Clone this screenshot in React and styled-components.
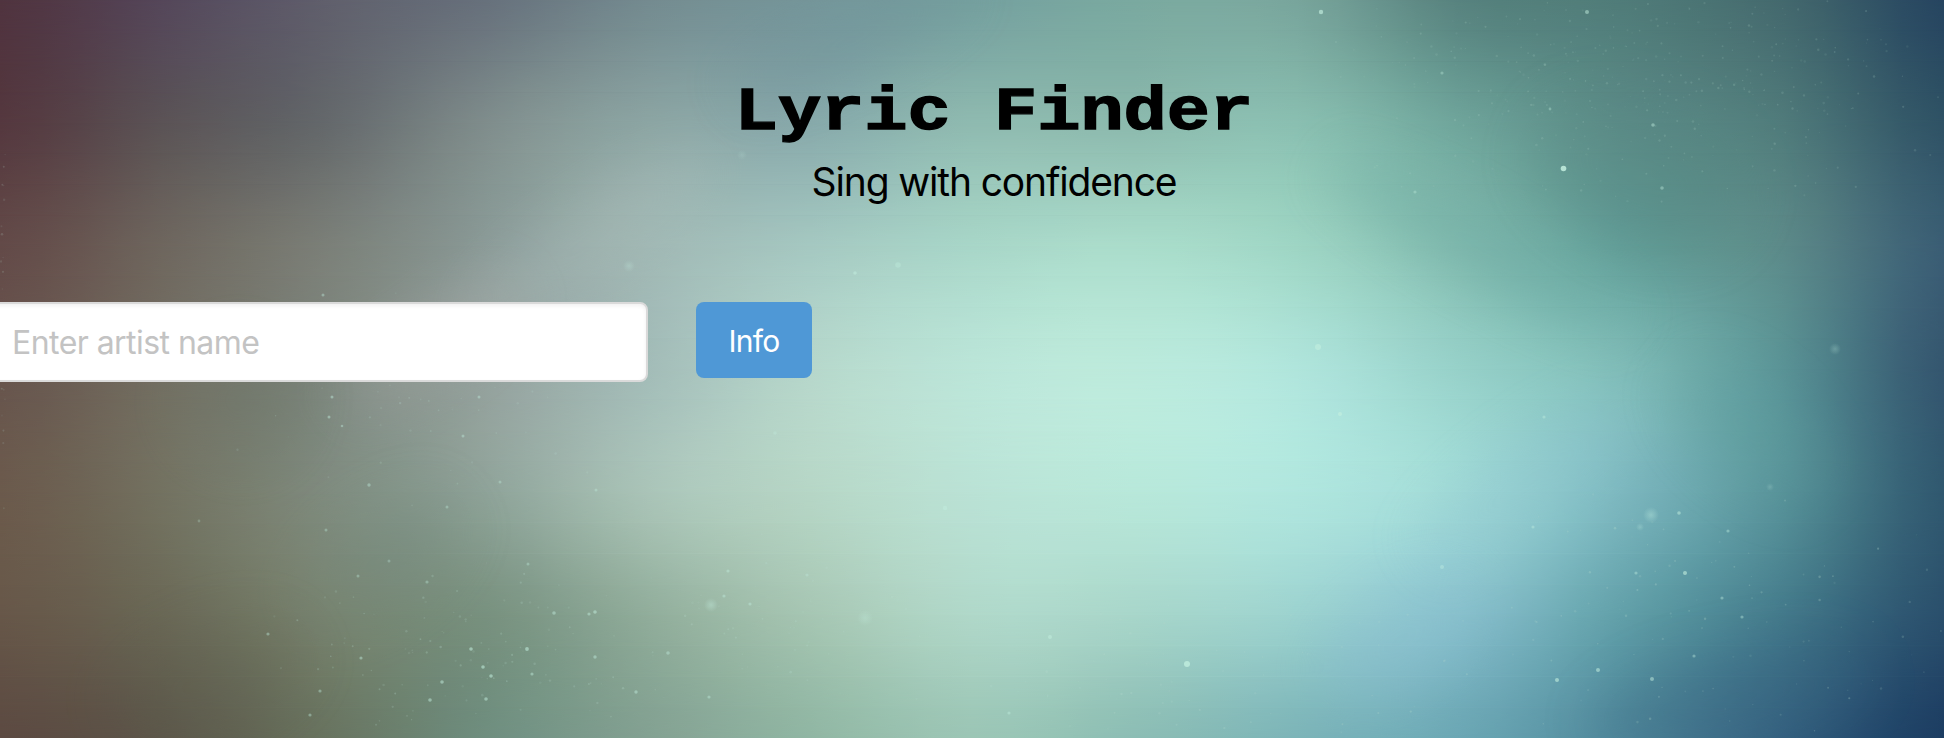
import React from 'react';
import styled, { createGlobalStyle } from 'styled-components';

const GlobalStyle = createGlobalStyle`
  body { margin: 0; font-family: Inter, "Liberation Sans", sans-serif; }
`;

const WIDTH = 1944;
const HEIGHT = 738;

/* Sky colours on an even grid, top to bottom, left to right. */
const SKY = [
  '50343f 55475a 605f6c 67717c 748b90 75969a 75a09f 7aa9a0 78a59c 58837f 507c79 44696e 264560',
  '55383f 5b5356 64686b 7f8d8c 8ca5a3 88aaab 8fbab0 8cbaae 8abfb1 6fa59b 5c8c88 507b7b 2f5265',
  '634a48 6e665e 7b7f78 8a9a97 9fb7b3 a5c8c1 a8d6c8 aadccb 9ed5c4 84bcb0 64a09a 5c8a89 3a5d74',
  '67544d 726e62 7b857c 94a19d a3bcb8 b6d7cb bbe5d8 bceadc b0e5dc 97d1c9 80bcb8 5a9396 34566f',
  '6b5a4c 737261 7f8b7e 8fa399 aac4b8 b6d6c6 bae2d5 b8e8da b0e6de a0d9d6 7db8bf 589299 30586f',
  '675749 6a6856 78836f 78917f 91ad9b a6c6b3 b0d8c9 a8d6ca 9cd2cf 88c0cb 62a0a9 447a8b 2a4f6c',
  '5c4a42 5d574a 68735f 6f8e7f 83a192 90b6a3 9bc5b5 8cbdb4 7cb4b8 6ba7b4 50889b 34607f 1c3d62',
].map((row) =>
  row.split(' ').map((hex) => [0, 2, 4].map((i) => parseInt(hex.slice(i, i + 2), 16)))
);

const spline = (a, b, c, d, t) =>
  0.5 * (2 * b + (c - a) * t + (2 * a - 5 * b + 4 * c - d) * t * t + (3 * b - a - 3 * c + d) * t * t * t);

const at = (list, i) => list[Math.max(0, Math.min(list.length - 1, i))];

function subdivide(points, steps) {
  const out = [];
  for (let i = 0; i < points.length - 1; i += 1) {
    for (let s = 0; s < steps; s += 1) {
      out.push(
        points[i].map((_, ch) =>
          spline(at(points, i - 1)[ch], points[i][ch], points[i + 1][ch], at(points, i + 2)[ch], s / steps)
        )
      );
    }
  }
  out.push(points[points.length - 1]);
  return out;
}

const fineRows = SKY.map((row) => subdivide(row, 4));
const fineColumns = fineRows[0].map((_, x) => subdivide(fineRows.map((row) => row[x]), 4));
const BANDS = fineColumns[0].map((_, y) => fineColumns.map((column) => column[y]));
const STEP = HEIGHT / (BANDS.length - 1);

/* Soft beams of light: x, y, rx, ry, rotation, colour, opacity. */
const GLOWS = [
  [590, 240, 150, 34, -35, '#b4c2c0', 0.25],
  [430, 345, 110, 28, -35, '#a9aba8', 0.4],
  [240, 400, 60, 60, 20, '#6c7467', 0.25],
  [210, 680, 100, 50, -20, '#5b5e4f', 0.2],
  [380, 560, 90, 45, -35, '#6e867c', 0.25],
  [1640, 175, 110, 70, 20, '#54847f', 0.25],
  [1480, 245, 170, 28, 28, '#6aa9a2', 0.4],
  [1530, 480, 130, 34, -35, '#8cc4d0', 0.25],
  [1400, 640, 90, 45, -35, '#89bfd2', 0.3],
  [1750, 430, 90, 45, 40, '#5b9c9c', 0.25],
  [1730, 700, 140, 45, -12, '#386580', 0.25],
  [850, 40, 130, 26, -25, '#6e9197', 0.3],
];

/* Bright stars: x, y, radius, opacity. */
const STARS = [
  [1321, 12, 2.2, 0.65], [1587, 12, 2, 0.5], [1563.5, 168.5, 2.8, 0.85], [1653, 125, 1.8, 0.45],
  [1662, 188, 1.8, 0.4], [1442, 73, 1.6, 0.35], [1415, 192, 1.6, 0.35], [1318, 347, 3, 0.55],
  [1340, 414, 2, 0.6], [1187, 664, 3, 0.75], [898, 265, 2.8, 0.35], [855, 273, 1.8, 0.5],
  [945, 508, 2.2, 0.4], [775, 433, 1.8, 0.3], [1679, 513, 1.8, 0.5], [1685, 573, 2, 0.6],
  [1442, 567, 2, 0.4], [1598, 670, 2, 0.55], [1557, 680, 2, 0.6], [1652, 679, 2, 0.5],
  [1636, 573, 1.6, 0.4], [1722, 598, 1.6, 0.4], [1742, 617, 1.6, 0.4], [1550, 109, 1.4, 0.35],
  [1533, 527, 1.6, 0.4], [1728, 531, 1.6, 0.4], [1544, 417, 1.6, 0.4], [1694, 656, 1.6, 0.4],
  [1050, 637, 2, 0.5], [668, 653, 1.8, 0.4], [709, 697, 1.6, 0.4], [1009, 713, 1.6, 0.4],
  [750, 604, 1.6, 0.4], [728, 571, 1.6, 0.4], [807, 575, 1.6, 0.3], [724, 596, 1.6, 0.4],
  [332, 397, 1.5, 0.45], [329, 417, 1.5, 0.45], [342, 426, 1.3, 0.4], [463, 436, 1.5, 0.4],
  [369, 485, 1.7, 0.4], [479, 397, 1.5, 0.4], [323, 295, 1.5, 0.4], [268, 634, 1.6, 0.4],
  [320, 691, 1.6, 0.4], [310, 715, 1.6, 0.4], [361, 658, 1.6, 0.45], [471, 649, 1.8, 0.55],
  [483, 667, 1.8, 0.55], [527, 649, 1.9, 0.55], [442, 682, 1.8, 0.5], [491, 676, 1.8, 0.55],
  [486, 699, 1.8, 0.5], [430, 700, 1.8, 0.5], [554, 613, 1.8, 0.45], [595, 612, 1.8, 0.5],
  [589, 614, 1.6, 0.45], [595, 657, 1.7, 0.45], [636, 692, 1.7, 0.45], [532, 674, 1.6, 0.45],
  [427, 582, 1.6, 0.35], [389, 561, 1.5, 0.3], [358, 576, 1.5, 0.35], [528, 564, 1.5, 0.35],
  [500, 482, 1.5, 0.35], [596, 490, 1.5, 0.35], [447, 507, 1.5, 0.35], [326, 530, 1.5, 0.35],
  [199, 521, 1.4, 0.25],
];

/* Large faint stars: x, y, radius, opacity. */
const HALOS = [
  [711, 605, 7, 0.35], [865, 618, 8, 0.25], [1651, 515, 8, 0.35], [1835, 349, 6, 0.25],
  [629, 266, 6, 0.25], [1770, 487, 4, 0.2], [1640, 527, 4, 0.25], [742, 155, 5, 0.15],
];

/* Dust clouds: centre x, y, spread x, y, count, opacity. */
const DUST = [
  [470, 650, 230, 90, 110, 0.22],
  [420, 400, 190, 120, 50, 0.2],
  [1640, 80, 340, 130, 420, 0.15],
  [1700, 620, 300, 130, 110, 0.22],
  [1180, 660, 280, 100, 80, 0.18],
  [800, 620, 200, 110, 60, 0.2],
  [2, 300, 4, 280, 24, 0.15],
];

function makeDust() {
  let seed = 71;
  const random = () => {
    seed = (seed * 16807) % 2147483647;
    return seed / 2147483647;
  };
  const spread = () => random() + random() - 1;
  return DUST.flatMap(([x, y, sx, sy, count, opacity]) =>
    Array.from({ length: count }, () => [
      x + spread() * sx,
      y + spread() * sy,
      0.6 + random() * 0.7,
      opacity * (0.4 + random() * 0.9),
    ])
  );
}

const DUST_STARS = makeDust();

const Page = styled.div`
  position: relative;
  width: 1944px;
  height: 738px;
  overflow: hidden;
`;

const Sky = styled.svg`
  position: absolute;
  inset: 0;
  width: 100%;
  height: 100%;
`;

const Content = styled.main`
  position: relative;
  display: flex;
  flex-direction: column;
`;

const Header = styled.header`
  display: flex;
  flex-direction: column;
  align-items: center;
  padding: 73px 0 0 44px;
  color: #000;
`;

const Title = styled.h1`
  margin: 0;
  font: 700 72px/80px "Liberation Mono", "Courier New", monospace;
  -webkit-text-stroke: 1.6px #000;
  stroke-linejoin: round;
  transform: scaleY(0.85);
`;

const Subtitle = styled.p`
  margin: 5px 0 0;
  font-size: 39px;
  line-height: 48px;
  letter-spacing: -1.15px;
`;

const SearchForm = styled.form`
  display: flex;
  align-items: flex-start;
  gap: 48px;
  margin: 96px 0 0 -12px;
`;

const ArtistInput = styled.input`
  box-sizing: border-box;
  width: 660px;
  height: 80px;
  padding: 0 22px;
  border: 2px solid #dadada;
  border-radius: 8px;
  background: #fff;
  box-shadow: inset 0 2px 4px rgba(0, 0, 0, 0.06);
  font: 400 32px Inter, sans-serif;
  letter-spacing: -0.55px;
  color: #333;
  outline: none;

  &::placeholder { color: #c3c3c3; opacity: 1; }
`;

const InfoButton = styled.button`
  width: 116px;
  height: 76px;
  padding: 2px 0 0;
  border: 0;
  border-radius: 8px;
  background: #4f98d6;
  color: #fff;
  font: 400 30px Inter, sans-serif;
  letter-spacing: -0.8px;
`;

function NightSky() {
  return (
    <Sky viewBox={`0 0 ${WIDTH} ${HEIGHT}`} preserveAspectRatio="none" aria-hidden="true">
      <defs>
        <linearGradient id="fade" x1="0" y1="0" x2="0" y2="1">
          <stop offset="0" stopColor="#fff" stopOpacity="0" />
          <stop offset="1" stopColor="#fff" />
        </linearGradient>
        <filter id="soft" x="-100%" y="-100%" width="300%" height="300%">
          <feGaussianBlur stdDeviation="28" />
        </filter>
        <radialGradient id="halo">
          <stop offset="0" stopColor="#c8f5e6" />
          <stop offset="1" stopColor="#c8f5e6" stopOpacity="0" />
        </radialGradient>
        {BANDS.map((band, i) => (
          <React.Fragment key={i}>
            <linearGradient id={`band${i}`}>
              {band.map((rgb, x) => (
                <stop key={x} offset={x / (band.length - 1)} stopColor={`rgb(${rgb.map(Math.round).join(',')})`} />
              ))}
            </linearGradient>
            {i > 0 && (
              <mask id={`mask${i}`} maskUnits="userSpaceOnUse" x="0" y="0" width={WIDTH} height={HEIGHT} style={{ maskType: 'alpha' }}>
                <rect y={(i - 1) * STEP} width={WIDTH} height={STEP} fill="url(#fade)" />
              </mask>
            )}
          </React.Fragment>
        ))}
      </defs>
      {BANDS.slice(1).map((_, i) => (
        <React.Fragment key={i}>
          <rect y={i * STEP} width={WIDTH} height={STEP + 1} fill={`url(#band${i})`} />
          <rect y={i * STEP} width={WIDTH} height={STEP} fill={`url(#band${i + 1})`} mask={`url(#mask${i + 1})`} />
        </React.Fragment>
      ))}
      {GLOWS.map(([x, y, rx, ry, angle, color, opacity], i) => (
        <ellipse key={i} rx={rx} ry={ry} fill={color} opacity={opacity} filter="url(#soft)" transform={`translate(${x} ${y}) rotate(${angle})`} />
      ))}
      {HALOS.map(([x, y, r, opacity], i) => (
        <circle key={i} cx={x} cy={y} r={r} fill="url(#halo)" opacity={opacity} />
      ))}
      {DUST_STARS.map(([x, y, r, opacity], i) => (
        <circle key={i} cx={x} cy={y} r={r} fill="#b9ddd0" opacity={opacity} />
      ))}
      {STARS.map(([x, y, r, opacity], i) => (
        <circle key={i} cx={x} cy={y} r={r} fill="#c4f0e0" opacity={opacity} />
      ))}
    </Sky>
  );
}

export default function App() {
  return (
    <Page>
      <GlobalStyle />
      <NightSky />
      <Content>
        <Header>
          <Title>Lyric Finder</Title>
          <Subtitle>Sing with confidence</Subtitle>
        </Header>
        <SearchForm onSubmit={(event) => event.preventDefault()}>
          <ArtistInput placeholder="Enter artist name" />
          <InfoButton type="submit">Info</InfoButton>
        </SearchForm>
      </Content>
    </Page>
  );
}
